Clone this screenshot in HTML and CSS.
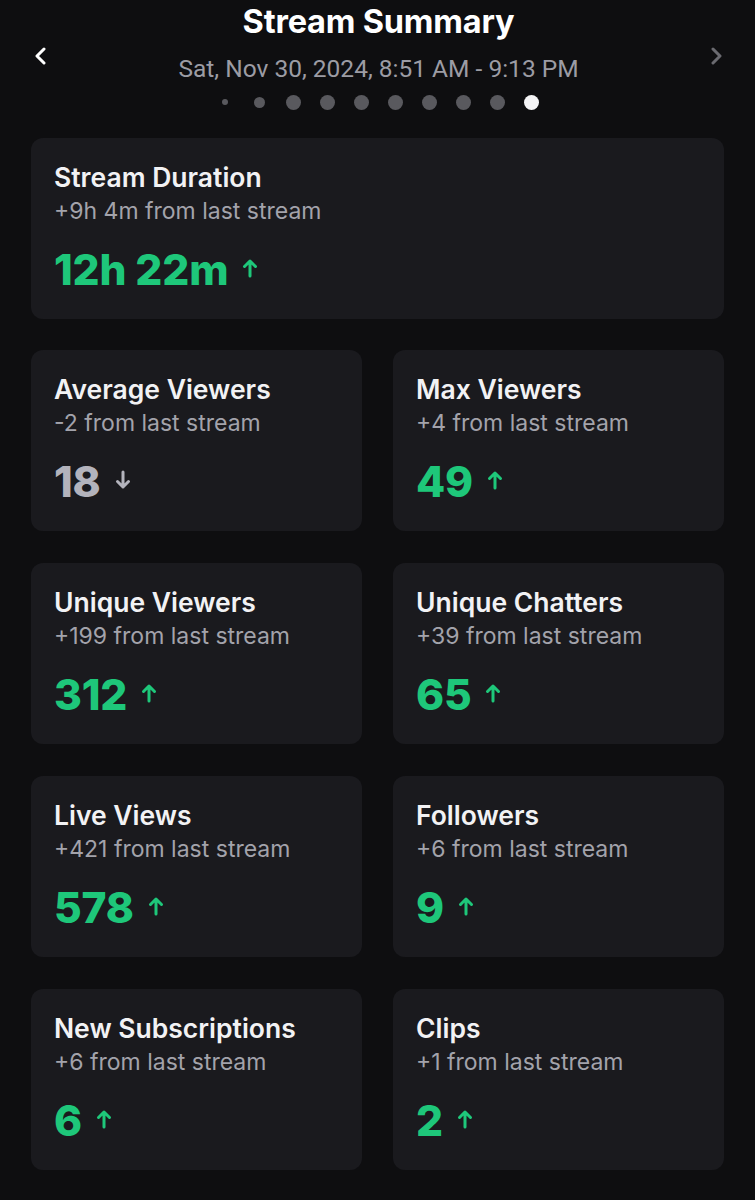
FILE: index.html
```html
<!DOCTYPE html>
<html>
<head>
<meta charset="utf-8">
<link rel="stylesheet" href="styles.css">
</head>
<body>
<div class="page">
  <header class="header">
    <button class="nav nav-prev" aria-label="Previous">
      <svg width="14" height="18" viewBox="0 0 14 18"><path d="M10 2 L3 9 L10 16" fill="none" stroke="#ffffff" stroke-width="3" stroke-linecap="round" stroke-linejoin="round"/></svg>
    </button>
    <div class="header-center">
      <h1 class="title">Stream Summary</h1>
      <div class="date">Sat, Nov 30, 2024, 8:51 AM - 9:13 PM</div>
      <div class="dots">
        <span class="slot"><span class="dot dot-xs"></span></span>
        <span class="slot"><span class="dot dot-sm"></span></span>
        <span class="slot"><span class="dot"></span></span>
        <span class="slot"><span class="dot"></span></span>
        <span class="slot"><span class="dot"></span></span>
        <span class="slot"><span class="dot"></span></span>
        <span class="slot"><span class="dot"></span></span>
        <span class="slot"><span class="dot"></span></span>
        <span class="slot"><span class="dot"></span></span>
        <span class="slot"><span class="dot dot-active"></span></span>
      </div>
    </div>
    <button class="nav nav-next" aria-label="Next">
      <svg width="14" height="18" viewBox="0 0 14 18"><path d="M4 2 L11 9 L4 16" fill="none" stroke="#6a6a70" stroke-width="3" stroke-linecap="round" stroke-linejoin="round"/></svg>
    </button>
  </header>

  <section class="card card-wide">
    <div class="card-title">Stream Duration</div>
    <div class="card-sub">+9h 4m from last stream</div>
    <div class="card-value up">12h 22m <svg class="arrow" width="16" height="22" viewBox="0 0 16 22"><path d="M8 19 V4 M2.5 9.5 L8 4 L13.5 9.5" fill="none" stroke="currentColor" stroke-width="3" stroke-linecap="round" stroke-linejoin="round"/></svg></div>
  </section>

  <div class="grid">
    <section class="card">
      <div class="card-title">Average Viewers</div>
      <div class="card-sub">-2 from last stream</div>
      <div class="card-value down">18 <svg class="arrow" width="16" height="22" viewBox="0 0 16 22"><path d="M8 3 V18 M2.5 12.5 L8 18 L13.5 12.5" fill="none" stroke="currentColor" stroke-width="3" stroke-linecap="round" stroke-linejoin="round"/></svg></div>
    </section>
    <section class="card">
      <div class="card-title">Max Viewers</div>
      <div class="card-sub">+4 from last stream</div>
      <div class="card-value up">49 <svg class="arrow" width="16" height="22" viewBox="0 0 16 22"><path d="M8 19 V4 M2.5 9.5 L8 4 L13.5 9.5" fill="none" stroke="currentColor" stroke-width="3" stroke-linecap="round" stroke-linejoin="round"/></svg></div>
    </section>
    <section class="card">
      <div class="card-title">Unique Viewers</div>
      <div class="card-sub">+199 from last stream</div>
      <div class="card-value up">312 <svg class="arrow" width="16" height="22" viewBox="0 0 16 22"><path d="M8 19 V4 M2.5 9.5 L8 4 L13.5 9.5" fill="none" stroke="currentColor" stroke-width="3" stroke-linecap="round" stroke-linejoin="round"/></svg></div>
    </section>
    <section class="card">
      <div class="card-title">Unique Chatters</div>
      <div class="card-sub">+39 from last stream</div>
      <div class="card-value up">65 <svg class="arrow" width="16" height="22" viewBox="0 0 16 22"><path d="M8 19 V4 M2.5 9.5 L8 4 L13.5 9.5" fill="none" stroke="currentColor" stroke-width="3" stroke-linecap="round" stroke-linejoin="round"/></svg></div>
    </section>
    <section class="card">
      <div class="card-title">Live Views</div>
      <div class="card-sub">+421 from last stream</div>
      <div class="card-value up">578 <svg class="arrow" width="16" height="22" viewBox="0 0 16 22"><path d="M8 19 V4 M2.5 9.5 L8 4 L13.5 9.5" fill="none" stroke="currentColor" stroke-width="3" stroke-linecap="round" stroke-linejoin="round"/></svg></div>
    </section>
    <section class="card">
      <div class="card-title">Followers</div>
      <div class="card-sub">+6 from last stream</div>
      <div class="card-value up">9 <svg class="arrow" width="16" height="22" viewBox="0 0 16 22"><path d="M8 19 V4 M2.5 9.5 L8 4 L13.5 9.5" fill="none" stroke="currentColor" stroke-width="3" stroke-linecap="round" stroke-linejoin="round"/></svg></div>
    </section>
    <section class="card">
      <div class="card-title">New Subscriptions</div>
      <div class="card-sub">+6 from last stream</div>
      <div class="card-value up">6 <svg class="arrow" width="16" height="22" viewBox="0 0 16 22"><path d="M8 19 V4 M2.5 9.5 L8 4 L13.5 9.5" fill="none" stroke="currentColor" stroke-width="3" stroke-linecap="round" stroke-linejoin="round"/></svg></div>
    </section>
    <section class="card">
      <div class="card-title">Clips</div>
      <div class="card-sub">+1 from last stream</div>
      <div class="card-value up">2 <svg class="arrow" width="16" height="22" viewBox="0 0 16 22"><path d="M8 19 V4 M2.5 9.5 L8 4 L13.5 9.5" fill="none" stroke="currentColor" stroke-width="3" stroke-linecap="round" stroke-linejoin="round"/></svg></div>
    </section>
  </div>
</div>
</body>
</html>
```

FILE: styles.css
```css
* { box-sizing: border-box; }
html, body {
  margin: 0;
  padding: 0;
  background: #0e0e10;
}
body {
  font-family: Inter, "Noto Sans", sans-serif;
  color: #efeff1;
  width: 755px;
  height: 1200px;
  overflow: hidden;
}
.page {
  padding: 0 31px;
}
.header {
  display: flex;
  align-items: flex-start;
  justify-content: space-between;
  height: 138px;
}
.nav {
  background: none;
  border: 0;
  padding: 0;
  margin-top: 47px;
  width: 20px;
  display: flex;
  justify-content: center;
  cursor: pointer;
}
.nav-next { margin-right: -2px; }
.header-center {
  display: flex;
  flex-direction: column;
  align-items: center;
}
.title {
  margin: 0;
  margin-top: 2px;
  font-size: 32.5px;
  line-height: 40px;
  font-weight: 700;
  color: #ffffff;
  letter-spacing: -0.2px;
}
.date {
  margin-top: 12px;
  font-family: Roboto, "Liberation Sans", sans-serif;
  font-size: 24.5px;
  line-height: 30px;
  color: #9c9ca4;
}
.dots {
  display: flex;
  margin-top: 10px;
  height: 16px;
  align-items: center;
}
.slot {
  width: 34px;
  display: flex;
  justify-content: center;
  align-items: center;
}
.dot {
  width: 15px;
  height: 15px;
  border-radius: 50%;
  background: #59595e;
}
.dot-xs { width: 6px; height: 6px; }
.dot-sm { width: 11px; height: 11px; }
.dot-active { background: #f4f4f6; }

.card {
  background: #1a1a1e;
  border-radius: 12px;
  height: 181px;
  padding: 23px 23px 0;
}
.card-wide {
  margin-bottom: 31px;
}
.grid {
  display: grid;
  grid-template-columns: 1fr 1fr;
  column-gap: 31px;
  row-gap: 32px;
}
.card-title {
  font-size: 26.5px;
  line-height: 32px;
  font-weight: 600;
  color: #f2f2f4;
}
.card-sub {
  margin-top: 3px;
  font-size: 23px;
  line-height: 30px;
  color: #a3a3ab;
}
.card-value {
  margin-top: 19px;
  font-size: 42.5px;
  line-height: 50px;
  font-weight: 800;
  letter-spacing: -0.2px;
  display: flex;
  align-items: center;
  gap: 14px;
}
.card-value.up { color: #1ec77a; }
.card-value.down { color: #b3b3bc; }
.arrow { margin-top: -4px; }
```
